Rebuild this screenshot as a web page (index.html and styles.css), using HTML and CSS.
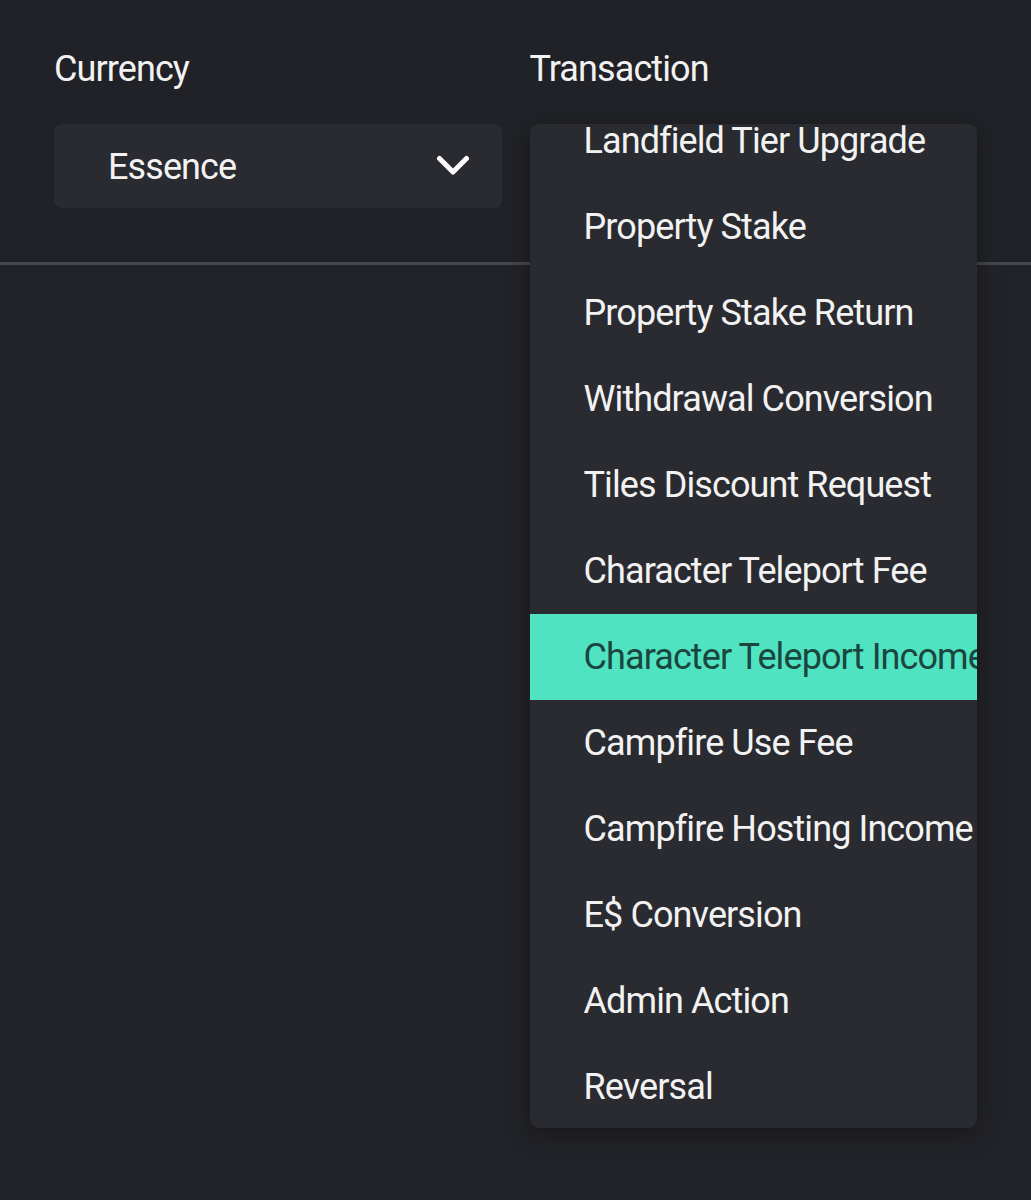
FILE: index.html
```html
<!DOCTYPE html>
<html lang="en">
<head>
    <meta charset="UTF-8">
    <meta name="viewport" content="width=device-width, initial-scale=1.0">
    <title>Transactions</title>
    <link rel="stylesheet" href="styles.css">
</head>
<body>

    <div class="filterBar">
        <div class="field">
            <div class="label">Currency</div>
            <div class="select">
                <span class="selectValue">Essence</span>
                <svg class="chevron" viewBox="0 0 34 22" width="34" height="22">
                    <polyline points="3.5,3.5 17,17 30.5,3.5" fill="none" stroke="#ffffff" stroke-width="5" stroke-linecap="round" stroke-linejoin="round"/>
                </svg>
            </div>
        </div>

        <div class="field">
            <div class="label">Transaction</div>
            <div class="selectWrap">
                <div class="select"></div>
                <div class="menu">
                    <ul class="menuList">
                        <li class="menuItem">Landfield Tier Upgrade</li>
                        <li class="menuItem">Property Stake</li>
                        <li class="menuItem">Property Stake Return</li>
                        <li class="menuItem">Withdrawal Conversion</li>
                        <li class="menuItem">Tiles Discount Request</li>
                        <li class="menuItem">Character Teleport Fee</li>
                        <li class="menuItem active">Character Teleport Income</li>
                        <li class="menuItem">Campfire Use Fee</li>
                        <li class="menuItem">Campfire Hosting Income</li>
                        <li class="menuItem">E$ Conversion</li>
                        <li class="menuItem">Admin Action</li>
                        <li class="menuItem">Reversal</li>
                    </ul>
                </div>
            </div>
        </div>
    </div>

</body>
</html>
```

FILE: styles.css
```css
body {
    background: #222328;
    color: #f2f2f2;
    font-family: Roboto, "Noto Sans", sans-serif;
    margin: 0;
    height: 1200px;
    overflow: hidden;
}
.filterBar {
    display: grid;
    grid-template-columns: 1fr 1fr;
    gap: 28px;
    padding: 48px 54px 54px;
    border-bottom: 3px solid #45474c;
    background: #212227;
}
.label {
    font-size: 36px;
    line-height: 43px;
    letter-spacing: -0.9px;
    margin-bottom: 33px;
}
.select {
    height: 84px;
    background: #2a2b30;
    border-radius: 8px;
    display: flex;
    align-items: center;
    justify-content: space-between;
    padding: 0 32px 0 54px;
}
.selectValue {
    font-size: 36px;
    letter-spacing: -0.9px;
    padding-top: 2px;
}
.chevron {
    display: block;
}
.selectWrap {
    position: relative;
}
.menu {
    position: absolute;
    top: 0;
    left: 0;
    right: 0;
    height: 1004px;
    background: #2a2b30;
    border-radius: 9px;
    overflow: hidden;
    box-shadow: 0 6px 24px rgba(0, 0, 0, 0.35);
    z-index: 2;
}
.menuList {
    list-style: none;
    margin: -26px 0 0;
    padding: 0;
}
.menuItem {
    height: 86px;
    display: flex;
    align-items: center;
    padding-left: 54px;
    font-size: 36px;
    letter-spacing: -0.9px;
    white-space: nowrap;
}
.menuItem.active {
    background: #50e3c2;
    color: #1a463d;
}
```
